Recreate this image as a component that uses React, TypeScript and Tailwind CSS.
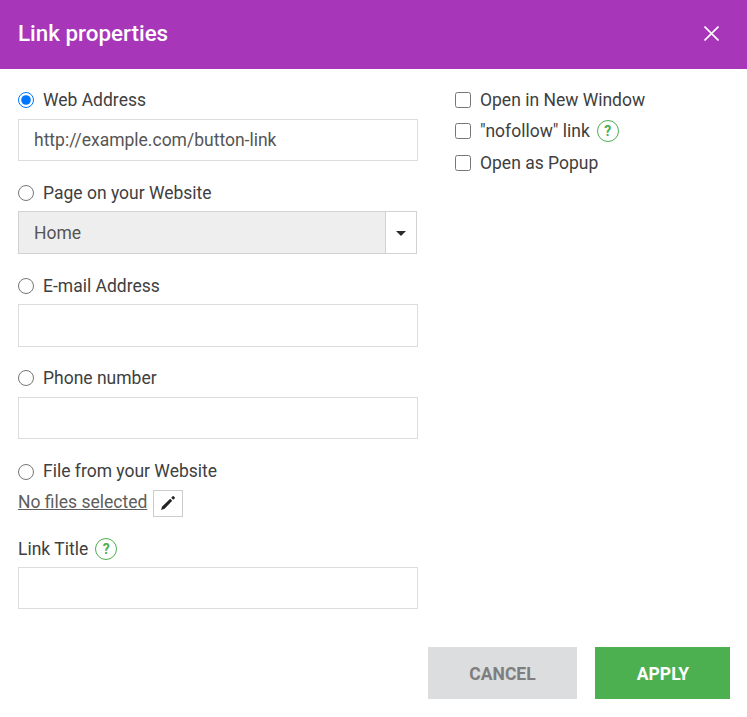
const inputCls =
  "block h-[42.6px] w-[400px] border border-[#dcdcdc] bg-white px-[15px] text-[17.5px] text-[#555555] outline-none";

function Help() {
  return (
    <span className="ml-[7px] flex h-[22px] w-[22px] items-center justify-center rounded-full border border-[#4caf50] text-[14px] font-bold leading-none text-[#4caf50]">
      ?
    </span>
  );
}

function RadioRow({ label, checked }: { label: string; checked?: boolean }) {
  return (
    <label className="mb-[6.2px] flex h-[24px] items-center text-[#404040]">
      <input type="radio" name="link-type" defaultChecked={checked} className="m-0 h-4 w-4" />
      <span className="ml-[9px]">{label}</span>
    </label>
  );
}

function CheckRow({ label, help }: { label: string; help?: boolean }) {
  return (
    <label className="flex h-[31.6px] items-center text-[#404040]">
      <input type="checkbox" className="m-0 h-4 w-4" />
      <span className="ml-[9px]">{label}</span>
      {help ? <Help /> : null}
    </label>
  );
}

export default function App() {
  return (
    <div className="h-[717px] w-[747px] overflow-hidden bg-white font-['Roboto',sans-serif] text-[17.5px]">
      <header className="flex h-[69px] items-center justify-between bg-[#a736b9] pb-[2px] pl-[18px] pr-[28px]">
        <h1 className="text-[22.4px] font-medium text-white">Link properties</h1>
        <button type="button" aria-label="Close">
          <svg width="15" height="15" viewBox="0 0 15 15" className="block stroke-white" strokeWidth="1.6">
            <path d="M.5.5l14 14M14.5.5l-14 14" />
          </svg>
        </button>
      </header>

      <div className="flex items-start px-[18px] pt-[15px]">
        <div className="mt-[4.4px] w-[400px]">
          <div className="mb-[20px]">
            <RadioRow label="Web Address" checked />
            <input className={inputCls} defaultValue="http://example.com/button-link" />
          </div>

          <div className="mb-[20px]">
            <RadioRow label="Page on your Website" />
            <div className="flex h-[42.6px] w-[399px] border border-[#d2d2d2] bg-[#eeeeee]">
              <span className="flex flex-1 items-center pl-[15px] text-[17.5px] text-[#555555]">Home</span>
              <span className="flex w-[31px] items-center justify-center border-l border-[#d2d2d2] bg-white">
                <svg width="10" height="5" viewBox="0 0 10 5" className="mt-[1px] block fill-[#2b2b2b]">
                  <path d="M0 0h10L5 5z" />
                </svg>
              </span>
            </div>
          </div>

          <div className="mb-[19.6px]">
            <RadioRow label="E-mail Address" />
            <input className={inputCls} />
          </div>

          <div className="mb-[20.4px]">
            <RadioRow label="Phone number" />
            <input className={inputCls} />
          </div>

          <div className="mb-[20px]">
            <RadioRow label="File from your Website" />
            <div className="flex h-[27px] items-center">
              <span className="-mt-[2px] text-[#5d5d5d] underline">No files selected</span>
              <button
                type="button"
                aria-label="Edit"
                className="ml-[6px] flex h-[27px] w-[30px] items-center justify-center border border-[#cccccc] bg-white"
              >
                <svg width="16" height="16" viewBox="0 0 16 16" className="block fill-[#222222]">
                  <path d="M1 15 2.2 11.4 10.2 3.8 12.2 5.8 4.6 13.8z" />
                  <path d="M11.2 2.8 12.7 1.3q.5-.4 1 0l1 1q.4.5 0 1L13.2 4.8z" />
                </svg>
              </button>
            </div>
          </div>

          <div>
            <div className="mb-[6.2px] flex h-[24px] items-center pt-[1px] text-[#404040]">
              Link Title
              <Help />
            </div>
            <input className={inputCls} />
          </div>
        </div>

        <div className="ml-[37px]">
          <CheckRow label="Open in New Window" />
          <CheckRow label={'"nofollow" link'} help />
          <CheckRow label="Open as Popup" />
        </div>
      </div>

      <footer className="mt-[37.6px] flex justify-end gap-[18px] pr-[17px]">
        <button type="button" className="h-[52px] w-[149px] bg-[#dcddde] pt-[2px] text-[17.5px] font-bold text-[#7e7e7e]">
          CANCEL
        </button>
        <button type="button" className="h-[52px] w-[135px] bg-[#4caf50] pl-[1px] pt-[2px] text-[17.5px] font-bold text-white">
          APPLY
        </button>
      </footer>
    </div>
  );
}
